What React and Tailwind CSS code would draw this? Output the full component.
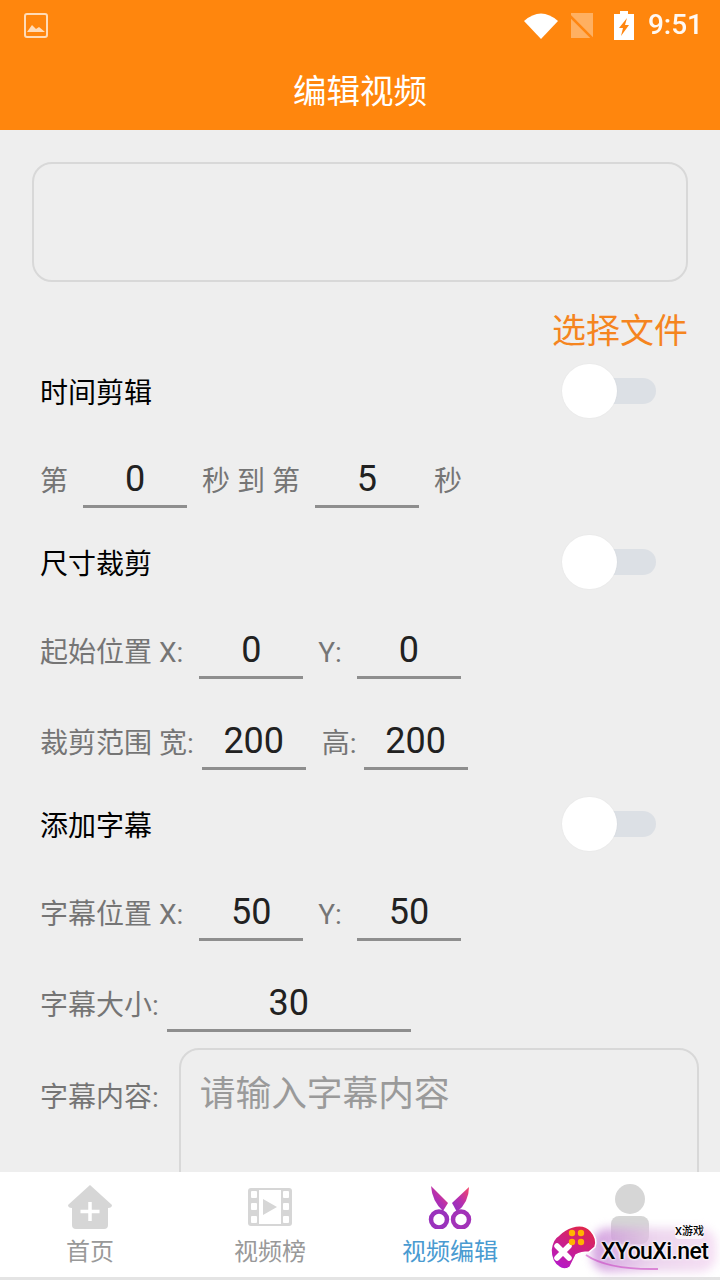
import React from "react";

const FONT = "font-['Roboto','Noto_Sans_CJK_SC',sans-serif]";

function Field({ w, value, ml = "ml-[15px]" }) {
  return (
    <div className={`${w} ${ml} h-[57px] pt-[1px] shrink-0 flex items-center justify-center border-b-[3px] border-[#8e8e8e] text-[36px] text-[#212121]`}>
      {value}
    </div>
  );
}

function Label({ children, ml = "" }) {
  return <span className={`${ml} pt-[5px] text-[28px] leading-none whitespace-pre text-[#757575] shrink-0`}>{children}</span>;
}

function ToggleRow({ label, mt = "mt-[27px]" }) {
  return (
    <div className={`${mt} h-[56px] flex items-center justify-between pl-[40px] pr-[64px]`}>
      <span className="pt-[4px] text-[28px] text-black leading-none">{label}</span>
      <div className="relative w-[94px] h-[56px]">
        <div className="absolute left-[40px] top-[14px] w-[54px] h-[26px] rounded-full bg-[#dce0e5]" />
        <div className="absolute left-0 top-0 w-[55px] h-[54px] rounded-full bg-white shadow-[0_0_2px_rgba(0,0,0,0.05)]" />
      </div>
    </div>
  );
}

function InputRow({ mt, children }) {
  return <div className={`${mt} h-[57px] flex items-center pl-[40px]`}>{children}</div>;
}

function StatusBar() {
  return (
    <div className="h-[50px] flex items-center pl-[24px] pr-[17px] text-white">
      <svg width="24" height="25" viewBox="0 0 24 25" className="opacity-70">
        <rect x="1" y="1" width="22" height="23" rx="2" fill="none" stroke="#fff" strokeWidth="2" />
        <path d="M3 19 L8 12 L12 16 L15 14 L21 19 Z" fill="#fff" />
      </svg>
      <div className="ml-auto flex items-center">
        <svg width="34" height="27" viewBox="0 0 34 27">
          <path d="M0 9 Q17 -6 34 9 L17 27 Z" fill="#fff" />
        </svg>
        <svg width="24" height="27" viewBox="0 0 24 27" className="ml-[12px]">
          <path d="M1 1 H23 V26 H1 Z" fill="#fff" opacity="0.35" />
          <path d="M0 4 L24 28" stroke="#ff8610" strokeWidth="2.5" />
        </svg>
        <svg width="20" height="29" viewBox="0 0 20 29" className="ml-[20px]">
          <path d="M6 0 H14 V3 H20 V29 H0 V3 H6 Z" fill="#fff" />
          <path d="M13 7 L5 17 H9 L7 25 L15 14 H11 Z" fill="#ff8610" />
        </svg>
        <span className="ml-[14px] text-[28px] leading-none font-medium opacity-95">9:51</span>
      </div>
    </div>
  );
}

function BottomNav() {
  const cell = "w-[180px] flex flex-col items-center";
  return (
    <div className="relative h-[105px] bg-white flex shrink-0">
      <div className={cell}>
        <svg width="44" height="44" viewBox="0 0 44 44" className="mt-[13px]">
          <path d="M22 0 L44 20 Q44 23 40 23 V40 Q40 44 36 44 H8 Q4 44 4 40 V23 Q0 23 0 20 Z" fill="#d6d6d6" />
          <path d="M22 17 V36 M12.5 26.5 H31.5" stroke="#fff" strokeWidth="3.5" />
        </svg>
        <span className="mt-[9px] text-[24px] leading-[28px] text-[#999]">首页</span>
      </div>
      <div className={cell}>
        <svg width="44" height="38" viewBox="0 0 44 38" className="mt-[16px] mb-[3px]">
          <rect width="44" height="38" rx="3" fill="#d6d6d6" />
          <rect x="11" y="2" width="22" height="34" fill="#fff" />
          <rect x="3" y="3" width="6" height="7" rx="1" fill="#fff" />
          <rect x="3" y="15" width="6" height="7" rx="1" fill="#fff" />
          <rect x="3" y="28" width="6" height="7" rx="1" fill="#fff" />
          <rect x="35" y="3" width="6" height="7" rx="1" fill="#fff" />
          <rect x="35" y="15" width="6" height="7" rx="1" fill="#fff" />
          <rect x="35" y="28" width="6" height="7" rx="1" fill="#fff" />
          <path d="M15 11 L29 19 L15 27 Z" fill="#d6d6d6" />
        </svg>
        <span className="mt-[9px] text-[24px] leading-[28px] text-[#999]">视频榜</span>
      </div>
      <div className={cell}>
        <svg width="44" height="44" viewBox="0 0 44 44" className="mt-[13px]">
          <defs>
            <linearGradient id="sc" x1="0.95" y1="0" x2="0.1" y2="1">
              <stop offset="0" stopColor="#f5466a" />
              <stop offset="0.55" stopColor="#b52fb0" />
              <stop offset="1" stopColor="#8a30c4" />
            </linearGradient>
          </defs>
          <path d="M3 1 L20 18 L15 26 Q4 16 3 1 Z" fill="url(#sc)" />
          <path d="M41 2 Q41 17 29 27 L24 18 Z" fill="url(#sc)" />
          <circle cx="22" cy="23" r="3.5" fill="#fff" />
          <circle cx="11" cy="34.5" r="8" fill="none" stroke="#9a32bc" strokeWidth="4.5" />
          <circle cx="33" cy="34.5" r="8" fill="none" stroke="#a232b8" strokeWidth="4.5" />
        </svg>
        <span className="mt-[9px] text-[24px] leading-[28px] text-[#4a9bd1]">视频编辑</span>
      </div>
      <div className={cell}>
        <svg width="38" height="60" viewBox="0 0 38 60" className="mt-[12px]">
          <circle cx="19" cy="15" r="15" fill="#d6d6d6" />
          <rect x="0" y="32" width="38" height="28" rx="8" fill="#d6d6d6" />
        </svg>
      </div>
      <Watermark />
    </div>
  );
}

function Watermark() {
  return (
    <div className="absolute left-[548px] top-[50px] w-[172px] h-[55px]">
      <div className="absolute left-[44px] top-[6px] w-[124px] h-[44px] rounded-[16px] bg-gradient-to-r from-[#c98ad8]/80 via-[#e4c4e6]/70 to-[#f0d0ee]/70 blur-[5px]" />
      <svg width="172" height="55" viewBox="0 0 172 55" className="absolute left-0 top-0">
        <defs>
          <linearGradient id="gp" x1="0.7" y1="0" x2="0.2" y2="1">
            <stop offset="0" stopColor="#e0264a" />
            <stop offset="1" stopColor="#b418cc" />
          </linearGradient>
        </defs>
        <path d="M38 33 Q60 48 110 47" fill="none" stroke="#c93dc0" strokeWidth="2" opacity="0.55" />
        <path d="M24 5 Q36 1 43 9 Q50 17 47 25 L41 30 Q33 30 28 33 L22 45 Q16 49 11 45 Q3 40 3 28 Q4 17 11 13 Q17 7 24 5 Z" fill="url(#gp)" stroke="#fff" strokeWidth="1.5" />
        <path d="M9 24 L21 36 M21 24 L9 36" stroke="#fff" strokeWidth="5.5" strokeLinecap="round" />
        <circle cx="24" cy="11" r="3.2" fill="#ffb400" />
        <circle cx="33" cy="11" r="3.2" fill="#ffb400" />
        <circle cx="24" cy="20" r="3.2" fill="#ffb400" />
        <circle cx="33" cy="20" r="3.2" fill="#ffb400" />
      </svg>
      <span className="absolute left-[53px] top-[16px] text-[23px] leading-[28px] tracking-[-0.6px] font-medium text-black whitespace-nowrap [text-shadow:0_0_3px_#fff,0_0_3px_#fff,0_0_2px_#fff]">XYouXi.net</span>
      <span className="absolute left-[127px] top-[3px] text-[11px] leading-[14px] font-medium text-black bg-white/70 rounded-[4px]">X游戏</span>
    </div>
  );
}

export default function App() {
  return (
    <div className={`${FONT} w-[720px] h-[1280px] flex flex-col overflow-hidden bg-[#eeeeee]`}>
      <header className="h-[130px] shrink-0 bg-[#ff860d]">
        <StatusBar />
        <div className="h-[80px] pt-[4px] flex items-center justify-center text-white text-[33.5px] leading-none">编辑视频</div>
      </header>

      <main className="h-[1042px] shrink-0 overflow-hidden">
        <div className="mt-[32px] mx-[32px] h-[120px] rounded-[20px] border-2 border-[#d8d8d8]" />
        <div className="mt-[28px] h-[40px] pt-[2px] flex items-center justify-end pr-[32px] text-[34px] leading-none text-[#f5851f]">选择文件</div>
        <div className="mt-[14px]">
          <ToggleRow label="时间剪辑" mt="mt-0" />
        </div>
        <InputRow mt="mt-[31px]">
          <Label>第</Label>
          <Field w="w-[104px]" value="0" />
          <Label ml="ml-[15px]">秒 到 第</Label>
          <Field w="w-[104px]" value="5" />
          <Label ml="ml-[15px]">秒</Label>
        </InputRow>
        <ToggleRow label="尺寸裁剪" />
        <InputRow mt="mt-[31px]">
          <Label>起始位置 X:</Label>
          <Field w="w-[104px]" value="0" ml="ml-[16px]" />
          <Label ml="ml-[15px]">Y:</Label>
          <Field w="w-[104px]" value="0" />
        </InputRow>
        <InputRow mt="mt-[34px]">
          <Label>裁剪范围 宽:</Label>
          <Field w="w-[104px]" value="200" ml="ml-[8px]" />
          <Label ml="ml-[16px]">高:</Label>
          <Field w="w-[104px]" value="200" ml="ml-[7px]" />
        </InputRow>
        <ToggleRow label="添加字幕" />
        <InputRow mt="mt-[31px]">
          <Label>字幕位置 X:</Label>
          <Field w="w-[104px]" value="50" ml="ml-[16px]" />
          <Label ml="ml-[15px]">Y:</Label>
          <Field w="w-[104px]" value="50" />
        </InputRow>
        <InputRow mt="mt-[34px]">
          <Label>字幕大小:</Label>
          <Field w="w-[244px]" value="30" ml="ml-[8px]" />
        </InputRow>
        <div className="mt-[16px] flex pl-[40px]">
          <span className="mt-[36px] text-[28px] leading-[28px] text-[#757575]">字幕内容:</span>
          <div className="ml-[20px] w-[520px] h-[160px] shrink-0 rounded-[20px] border-2 border-[#d8d8d8] pl-[19px] pt-[20px] text-[35.7px] leading-[48px] text-[#9a9a9a]">请输入字幕内容</div>
        </div>
      </main>

      <BottomNav />
      <div className="h-[3px] bg-[#e4e4e4]" />
    </div>
  );
}
